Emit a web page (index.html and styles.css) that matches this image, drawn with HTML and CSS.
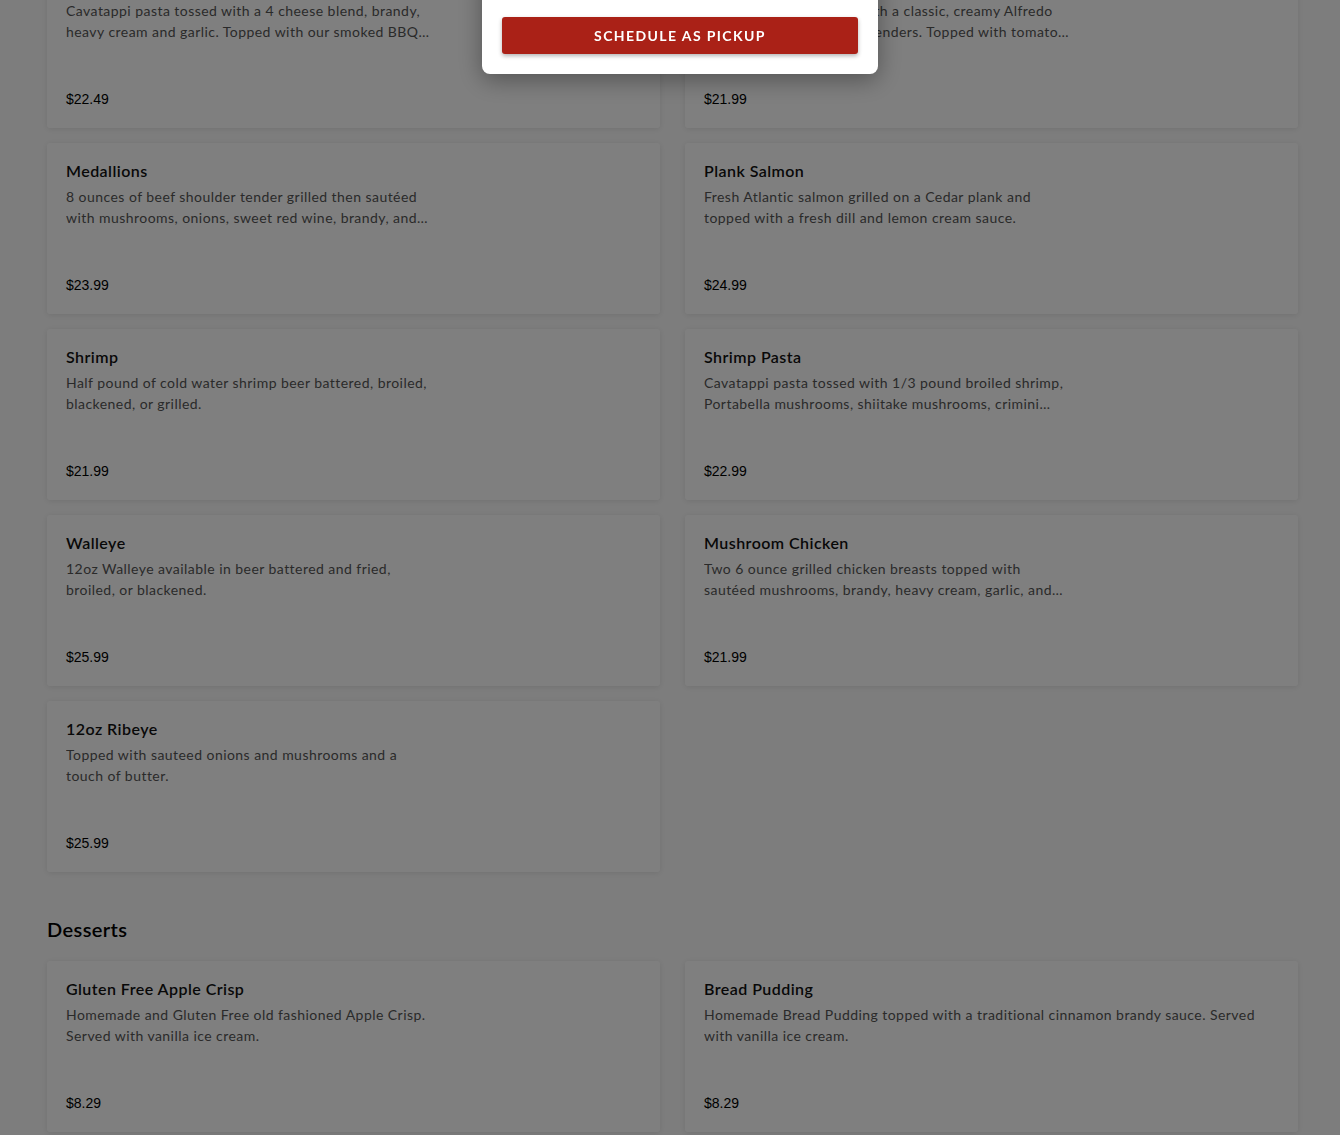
FILE: index.html
```html
<!DOCTYPE html>
<html lang="en">
<head>
  <meta charset="utf-8">
  <title>Menu</title>
  <link rel="stylesheet" href="styles.css">
</head>
<body>

  <main class="menu">
    <section class="category">
      <div class="item-grid">
        <div class="item-card">
          <h3 class="item-name">BBQ Chicken Mac</h3>
          <p class="item-desc">Cavatappi pasta tossed with a 4 cheese blend, brandy, heavy cream and garlic. Topped with our smoked BBQ chicken and green onions.</p>
          <span class="item-price">$22.49</span>
        </div>
        <div class="item-card">
          <h3 class="item-name">Chicken Alfredo</h3>
          <p class="item-desc">Cavatappi pasta tossed with a classic, creamy Alfredo sauce and crispy chicken tenders. Topped with tomatoes and parmesan.</p>
          <span class="item-price">$21.99</span>
        </div>
        <div class="item-card">
          <h3 class="item-name">Medallions</h3>
          <p class="item-desc">8 ounces of beef shoulder tender grilled then sautéed with mushrooms, onions, sweet red wine, brandy, and heavy cream.</p>
          <span class="item-price">$23.99</span>
        </div>
        <div class="item-card">
          <h3 class="item-name">Plank Salmon</h3>
          <p class="item-desc">Fresh Atlantic salmon grilled on a Cedar plank and topped with a fresh dill and lemon cream sauce.</p>
          <span class="item-price">$24.99</span>
        </div>
        <div class="item-card">
          <h3 class="item-name">Shrimp</h3>
          <p class="item-desc">Half pound of cold water shrimp beer battered, broiled, blackened, or grilled.</p>
          <span class="item-price">$21.99</span>
        </div>
        <div class="item-card">
          <h3 class="item-name">Shrimp Pasta</h3>
          <p class="item-desc">Cavatappi pasta tossed with 1/3 pound broiled shrimp, Portabella mushrooms, shiitake mushrooms, crimini mushrooms and cream.</p>
          <span class="item-price">$22.99</span>
        </div>
        <div class="item-card">
          <h3 class="item-name">Walleye</h3>
          <p class="item-desc">12oz Walleye available in beer battered and fried, broiled, or blackened.</p>
          <span class="item-price">$25.99</span>
        </div>
        <div class="item-card">
          <h3 class="item-name">Mushroom Chicken</h3>
          <p class="item-desc">Two 6 ounce grilled chicken breasts topped with sautéed mushrooms, brandy, heavy cream, garlic, and parmesan.</p>
          <span class="item-price">$21.99</span>
        </div>
        <div class="item-card">
          <h3 class="item-name">12oz Ribeye</h3>
          <p class="item-desc">Topped with sauteed onions and mushrooms and a touch of butter.</p>
          <span class="item-price">$25.99</span>
        </div>
      </div>
    </section>

    <section class="category">
      <h2 class="category-title">Desserts</h2>
      <div class="item-grid">
        <div class="item-card">
          <h3 class="item-name">Gluten Free Apple Crisp</h3>
          <p class="item-desc">Homemade and Gluten Free old fashioned Apple Crisp. Served with vanilla ice cream.</p>
          <span class="item-price">$8.29</span>
        </div>
        <div class="item-card">
          <h3 class="item-name">Bread Pudding</h3>
          <p class="item-desc wide">Homemade Bread Pudding topped with a traditional cinnamon brandy sauce. Served with vanilla ice cream.</p>
          <span class="item-price">$8.29</span>
        </div>
      </div>
    </section>
  </main>

  <div class="overlay"></div>

  <div class="modal">
    <button class="pickup-btn">Schedule as pickup</button>
  </div>

</body>
</html>
```

FILE: styles.css
```css
/* Reset */
* {
  margin: 0;
  padding: 0;
  box-sizing: border-box;
}

body {
  font-family: Lato, "Noto Sans", sans-serif;
  background: #fbfbfb;
  color: #000;
  height: 1135px;
  overflow: hidden;
}

/* Menu layout */
.menu {
  padding: 0 42px 0 47px;
  margin-top: -43px; /* page is scrolled down a bit */
}

.category-title {
  font-size: 20px;
  font-weight: 600;
  line-height: 24px;
  margin: 45px 0 20px;
  letter-spacing: 0.4px;
}

.item-grid {
  display: grid;
  grid-template-columns: 613px 613px;
  column-gap: 25px;
  row-gap: 15px;
}

.item-card {
  background: #fff;
  height: 171px;
  padding: 18px 19px 20px;
  display: flex;
  flex-direction: column;
  border-radius: 3px;
  box-shadow: 0 1px 6px rgba(0, 0, 0, 0.1);
}

.item-name {
  font-size: 16px;
  font-weight: 600;
  line-height: 20px;
  color: #111;
  letter-spacing: 0.45px;
}

.item-desc {
  margin-top: 5px;
  font-size: 14px;
  line-height: 21px;
  color: #555;
  max-width: 372px;
  display: -webkit-box;
  -webkit-line-clamp: 2;
  -webkit-box-orient: vertical;
  overflow: hidden;
  letter-spacing: 0.45px;
}

.item-desc.wide {
  max-width: 560px;
}

.item-price {
  margin-top: auto;
  font-family: "Liberation Sans", Arial, sans-serif;
  font-size: 14px;
  line-height: 18px;
  color: #000;
}

/* Dimmed overlay behind the modal */
.overlay {
  position: fixed;
  inset: 0;
  background: rgba(0, 0, 0, 0.5);
}

.modal {
  position: fixed;
  top: -30px;
  left: 482px;
  width: 396px;
  padding: 47px 20px 20px;
  background: #fff;
  border-radius: 8px;
  box-shadow: 0 6px 24px rgba(0, 0, 0, 0.35);
}

.pickup-btn {
  display: block;
  width: 100%;
  height: 37px;
  border: none;
  border-radius: 3px;
  background: #aa2117;
  color: #fff;
  font-family: Lato, "Noto Sans", sans-serif;
  font-size: 14px;
  font-weight: 700;
  letter-spacing: 1.4px;
  text-transform: uppercase;
  box-shadow: 0 2px 4px rgba(0, 0, 0, 0.3);
  cursor: pointer;
}
```
